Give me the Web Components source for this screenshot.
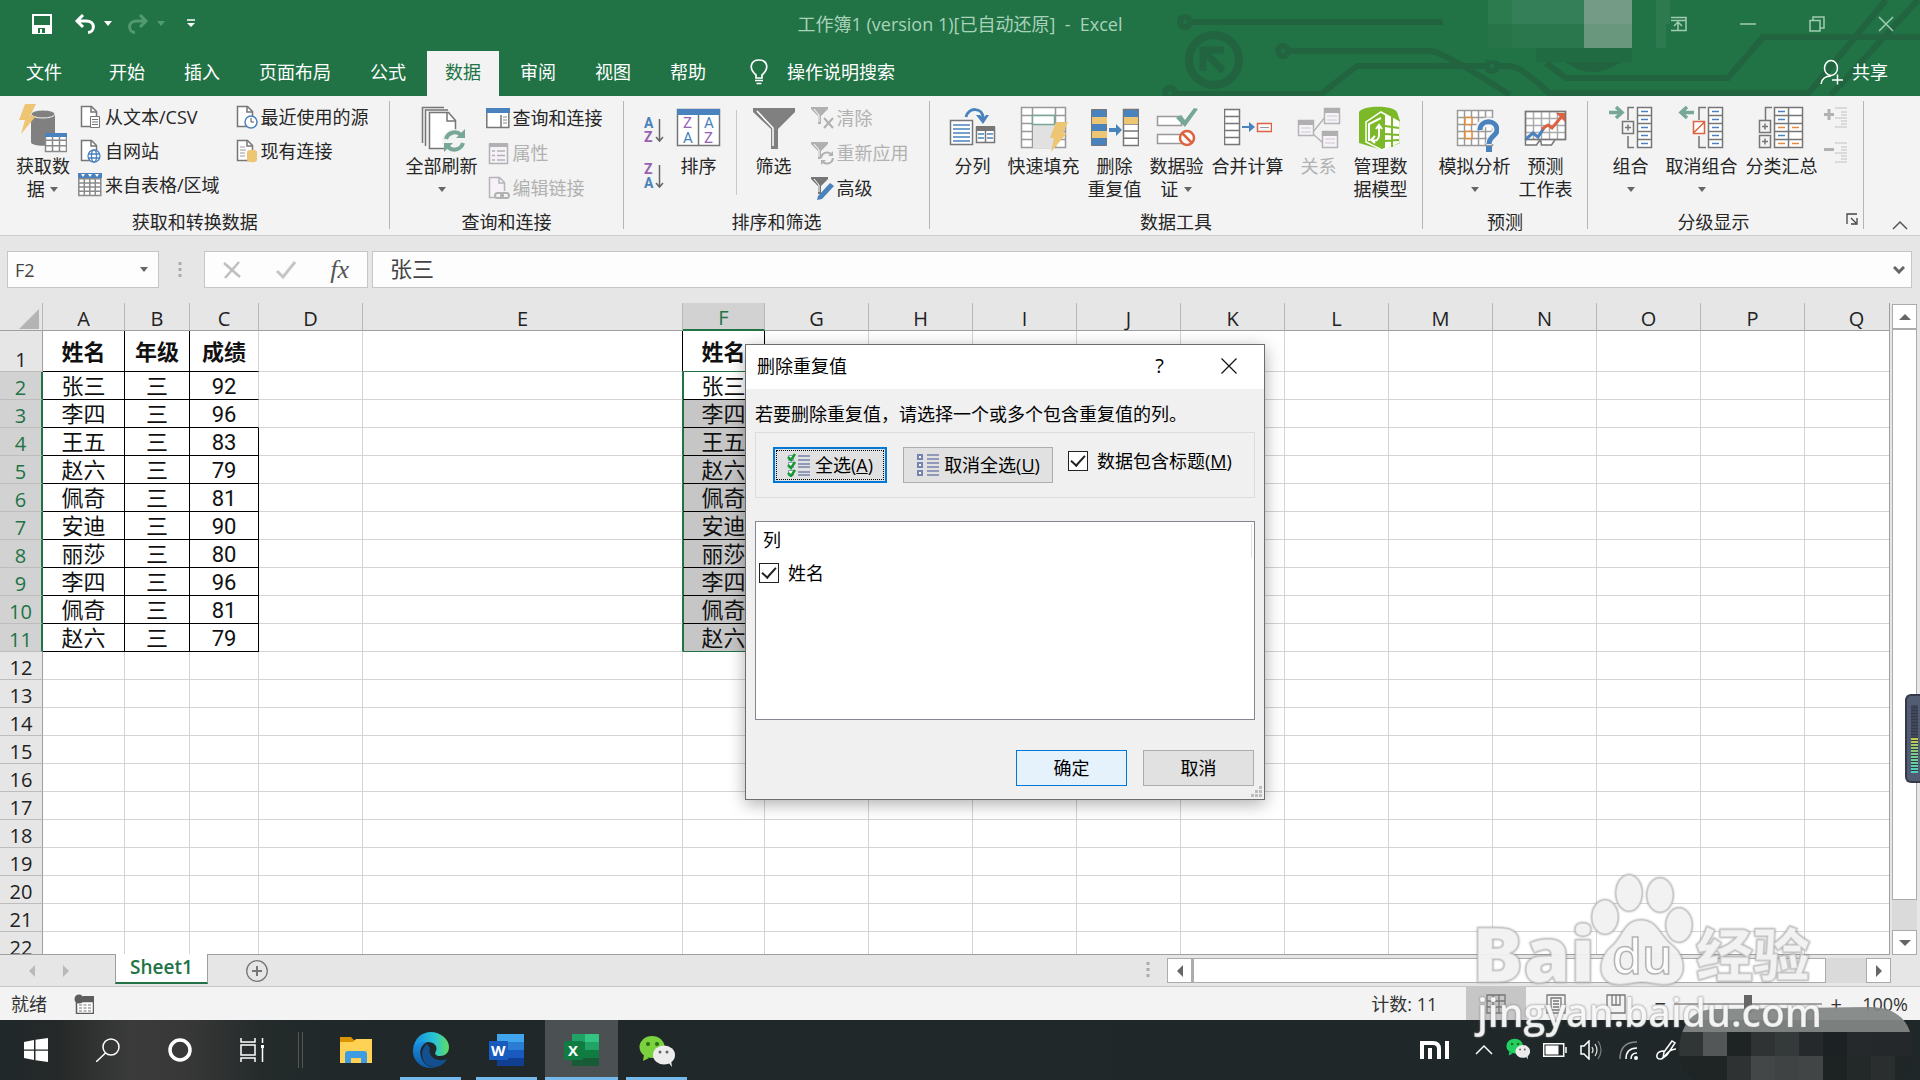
<!DOCTYPE html>
<html lang="zh-CN">
<head>
<meta charset="utf-8">
<title>工作簿1 - Excel</title>
<style>
html,body{margin:0;height:100%}
body{font-family:"Open Sans","Noto Sans CJK SC",sans-serif;font-size:18px;line-height:24px;color:#262626;overflow:hidden;background:#e6e6e6}
</style>
</head>
<body>
<excel-desktop></excel-desktop>
<script>
const BASE = `*{box-sizing:border-box}
button,input{font:inherit;color:inherit;margin:0;padding:0;border:0;background:none;letter-spacing:normal;outline:0}
svg{display:block}`;

/* Registers an element whose shadow tree is built from a css string and a markup string or function. */
function define(name, css, html) {
  customElements.define(name, class extends HTMLElement {
    connectedCallback() {
      if (this.shadowRoot) return;
      const t = document.createElement('template');
      t.innerHTML = `<style>${BASE}${css}</style>${typeof html === 'function' ? html(this) : html}`;
      this.attachShadow({ mode: 'open' }).append(t.content.cloneNode(true));
    }
  });
}

const G = '#767676', B = '#4a82bd', T = '#76a797', O = '#e58a3c', R = '#dc6240', Y = '#eec573', P = '#9660b4';
const page = (c, f = '#fff') => `<path d="M3.5 1.500h10l5 5v15h-15z" fill="${f}" stroke="${c}" stroke-width="1.500"/><path d="M13 2v5h5" fill="none" stroke="${c}" stroke-width="1.500"/>`;
const cells = (x, y, w, h, nx, ny, c, sw = 1.5) => {
  let d = `M${x} ${y}h${w}v${h}h${-w}z`;
  for (let i = 1; i < nx; i++) d += `M${x + w * i / nx} ${y}v${h}`;
  for (let i = 1; i < ny; i++) d += `M${x} ${y + h * i / ny}h${w}`;
  return `<path d="${d}" fill="#fff" stroke="${c}" stroke-width="${sw}"/>`;
};
const funnel = (x, c) => `<path d="M1 1h17v2l-7 7v8h-3v-8l-7-7z" fill="${c}"/><path d="M4 3l5 6v7" stroke="#fff" stroke-width="1" fill="none"/>${x}`;
const az = (a, b, ca, cb) => `<g font-family="Roboto" font-size="14" font-weight="700"><text x="1" y="11" fill="${ca}">${a}</text><text x="1" y="25" fill="${cb}">${b}</text></g><path d="M16.500 2v22M13 20l3.500 4 3.500-4" fill="none" stroke="#666" stroke-width="1.500"/>`;
const wechat = `<ellipse cx="13" cy="12" rx="12.500" ry="11" fill="#7bd23f"/><path d="M5 20l-1 6 6-3z" fill="#7bd23f"/><circle cx="9" cy="9" r="2" fill="#2a6b1c"/><circle cx="18" cy="9" r="2" fill="#2a6b1c"/><ellipse cx="25" cy="20" rx="11" ry="9.500" fill="#ececec"/><path d="M29 27l4 5-1-7z" fill="#ececec"/><circle cx="21" cy="17" r="1.500" fill="#666"/><circle cx="28" cy="17" r="1.500" fill="#666"/>`;

const ICONS = {
  getdata: [48, 52, `<path d="M12 11v28c0 5 24 5 24 0V11z" fill="#808080"/><ellipse cx="24" cy="11" rx="12" ry="4" fill="#808080" stroke="#f3f3f3"/><path d="M6 1h11l-6 12h6L2 31l4-14H0z" fill="${Y}"/>${cells(26.500, 31.500, 21, 17, 3, 3, '#8a8a8a')}<path d="M26 30h22v4H26z" fill="${B}"/>`],
  refresh: [48, 52, `<path d="M4.500 40V4.500H26M7.500 43V7H30" fill="none" stroke="${G}" stroke-width="1.500"/><path d="M11.500 9.500h19l7 8v28h-26z" fill="#fff" stroke="${G}" stroke-width="1.500"/><path d="M29 10v8h8" fill="none" stroke="${G}" stroke-width="1.500"/><circle cx="36" cy="38" r="12" fill="#f3f3f3"/><path d="M28 36a9 9 0 0 1 15-4M45 40a9 9 0 0 1-15 4" fill="none" stroke="${T}" stroke-width="4"/><path d="M47 26v9h-9zM26 49v-9h9z" fill="${T}"/>`],
  sort: [48, 52, `<path d="M2.500 6.500h42v36h-42zM23.500 12v30" fill="#fff" stroke="${G}" stroke-width="1.500"/><path d="M2 6h43v6H2z" fill="${B}"/><g font-family="Roboto" font-size="15"><text x="8" y="25" fill="${P}">Z</text><text x="8" y="40" fill="${B}">A</text><text x="29" y="25" fill="${B}">A</text><text x="29" y="40" fill="${P}">Z</text></g>`],
  filter: [48, 52, `<path d="M3 5h42v4L28 26v20h-7V26L3 9z" fill="#808080"/><path d="M7 8l16 17v18" fill="none" stroke="#fff" stroke-width="1.500"/>`],
  textcol: [48, 52, `<path d="M1.500 17.500h22v24h-22z" fill="#fff" stroke="${G}" stroke-width="1.500"/><path d="M4 22h17M4 26h17M4 30h17M4 34h17M4 38h17" stroke="${B}" stroke-width="1.500"/><path d="M17 14c2-10 17-10 17 1" fill="none" stroke="${B}" stroke-width="3"/><path d="M27 12h4l3 3 3-3h3l-6 9z" fill="${B}"/>${cells(27.500, 24.500, 18, 15, 2, 1, G)}<path d="M27 23h19v5H27z" fill="${G}"/><path d="M29 31h6M38 31h6M29 35h6M38 35h6" stroke="${B}" stroke-width="1.500"/>`],
  flash: [48, 52, `${cells(1.500, 4.500, 44, 40, 1, 5, '#999')}<path d="M12.500 4v41M35.500 4v41" stroke="#999" stroke-width="1.500"/><path d="M13 22h22v23H13z" fill="#e1e1e1"/><path d="M12.500 12.500h22v9h-22z" fill="#fff" stroke="${T}" stroke-width="1.500"/><path d="M36 19h12l-5 11h4L31 49l3-14h-4z" fill="${Y}"/>`],
  dedupe: [48, 52, `<path d="M.5 6.500h15v36h-15z" fill="${B}" stroke="${G}"/><path d="M1 14h15v7H1zM1 28h15v7H1z" fill="${Y}"/>${cells(32.500, 6.500, 15, 36, 1, 5, G)}<path d="M33 7h14v7H33z" fill="${B}"/><path d="M33 14h14v7H33z" fill="${Y}"/><path d="M18 25h7v-4l6 6-6 6v-4h-7z" fill="${B}"/>`],
  validate: [48, 52, `<path d="M4.500 13.500h24v9h-24zM4.500 31.500h24v9h-24z" fill="#fff" stroke="#999" stroke-width="1.500"/><path d="M23 15l5-3 4 5 9-12 4 1-13 18z" fill="${T}"/><circle cx="34" cy="35" r="7" fill="#fff" stroke="${R}" stroke-width="2.500"/><path d="M29 30l10 10" stroke="${R}" stroke-width="2.500"/>`],
  merge: [48, 52, `${cells(.5, 6.500, 15, 35, 1, 5, G)}<path d="M18 23h7v-4l6 5-6 5v-4h-7z" fill="${B}"/><path d="M33.500 20.500h14v8h-14z" fill="#fff" stroke="${R}" stroke-width="1.500"/><path d="M36 24.500h9" stroke="#999"/>`],
  relation: [48, 52, `<path d="M18 29L31 13M18 31l10 9" stroke="#b5b5b5" stroke-width="1.500"/><path d="M3.500 17.500h15v15h-15zM29.500 5.500h15v15h-15zM27.500 28.500h15v16h-15z" fill="#f7f1f9" stroke="#b5b5b5" stroke-width="1.500"/><path d="M3 17h16v5H3zM29 5h16v5H29zM27 28h16v5H27z" fill="#b0aeb1"/><path d="M6 25h10M6 29h10M32 13h10M32 17h10M30 36h10M30 40h10" stroke="#ccc"/>`],
  model: [48, 52, `<path d="M2 9c4-7 34-7 38 0l3 9v22L25 47 2 40z" fill="#7bb928"/><path d="M9 39V19l15-10 18 10v20L25 47z" fill="#7bb928" stroke="#fff" stroke-width="1.500"/><path d="M28 12v34l14-8V19z" fill="#fff"/><path d="M28 23l14 2M28 31l14 1M28 38l14-1M35 14v30" stroke="#7bb928" stroke-width="2"/><path d="M12 38V21l12-6M22 23v9q0 7-7 5M19 26l3-4 3 4M18 33l-4 4 4 3" fill="none" stroke="#fff" stroke-width="2"/>`],
  whatif: [48, 52, `${cells(6.500, 7.500, 35, 35, 5, 5, '#9a9a9a')}<path d="M14 14.500h7v7h-7zM14 28.500h7v7h-7z" fill="#fff" stroke="${O}" stroke-width="1.500"/><path d="M29 27c0-11 17-11 17 0 0 6-7 6-7 14" fill="none" stroke="#f3f3f3" stroke-width="9"/><path d="M29 27c0-11 17-11 17 0 0 6-8 6-8 14" fill="none" stroke="${B}" stroke-width="5"/><path d="M35 43h6v6h-6z" fill="${B}"/>`],
  forecast: [48, 52, `<path d="M3.500 36v6h11l4-6 1 6h10l4-6" fill="#fff" stroke="${G}" stroke-width="1.500"/>${cells(3.500, 8.500, 40, 28, 5, 4, '#aaa')}<path d="M3.500 8.500h40v28h-40z" fill="none" stroke="${G}" stroke-width="1.500"/><path d="M4 36l7-6 5 4 6-9" fill="none" stroke="${B}" stroke-width="3"/><path d="M20 26l6-4 4 3 11-13" fill="none" stroke="${R}" stroke-width="3"/><path d="M34 10h9v9z" fill="${R}"/>`],
  group: [48, 52, `<path d="M2 9.500h11M9 4l6 5.500L9 15" fill="none" stroke="${T}" stroke-width="3.500"/><path d="M27 4.500h-6V17M27 44.500h-6V33M15.500 18.500h11v12h-11zM18 24.500h6M21 21.500v6" fill="none" stroke="${G}" stroke-width="1.500"/>${cells(30.500, 4.500, 14, 40, 1, 5, G)}<path d="M34 8.500h7M34 16.500h7M34 24.500h7M34 32.500h7M34 40.500h7" stroke="${B}" stroke-width="1.500"/>`],
  ungroup: [48, 52, `<path d="M3 9.500h13M9 4L3 9.500 9 15" fill="none" stroke="${T}" stroke-width="3.500"/><path d="M28 4.500h-7V17M28 44.500h-7V33" fill="none" stroke="${G}" stroke-width="1.500"/><path d="M15.500 18.500h11v12h-11zM15.500 30l11-11" fill="#fff" stroke="${R}" stroke-width="1.500"/>${cells(30.500, 4.500, 14, 40, 1, 5, G)}<path d="M34 8.500h7M34 16.500h7M34 24.500h7M34 32.500h7M34 40.500h7" stroke="${B}" stroke-width="1.500"/>`],
  subtotal: [48, 52, `<path d="M14 4.500H7.500V17M1.500 17.500h11v12h-11zM1.500 32.500h11v12h-11zM4 23.500h6M7 20.500v6M4 38.500h6M7 35.500v6" fill="none" stroke="${G}" stroke-width="1.500"/>${cells(16.500, 4.500, 28, 40, 2, 5, G)}<path d="M20 8.500h7M20 16.500h7M20 32.500h7" stroke="${B}" stroke-width="1.500"/><path d="M20 24.500h7M34 24.500h7M20 40.500h7M34 40.500h7" stroke="${O}" stroke-width="1.500"/>`],
  csv: [24, 24, page(G) + `<path d="M12.500 11.500h9v11h-9z" fill="#fff" stroke="${G}"/><path d="M14 14.500h6M14 17h6M14 19.500h6" stroke="${G}"/>`],
  web: [24, 24, page(G) + `<g fill="#fff" stroke="${B}" stroke-width="1.300"><circle cx="16" cy="17" r="6"/><ellipse cx="16" cy="17" rx="2.500" ry="6"/><path d="M10 15h12M10 19h12"/></g>`],
  range: [24, 24, cells(.8, 1.500, 22, 21, 4, 5, '#8a8a8a') + `<path d="M0 0h24v5H0z" fill="${B}"/><path d="M3 1h4l-2 3zM10 1h4l-2 3zM17 1h4l-2 3z" fill="#fff"/>`],
  recent: [24, 24, page(G) + `<circle cx="17" cy="17" r="6" fill="#fff" stroke="${B}" stroke-width="1.500"/><path d="M17 13v4h3" fill="none" stroke="#555"/>`],
  existing: [24, 24, page(G) + `<path d="M6 8h5M6 11h6M6 14h5M6 17h5" stroke="#999"/><path d="M13 13v8c0 3 10 3 10 0v-8c0-3-10-3-10 0z" fill="${Y}"/>`],
  queries: [24, 24, `<path d="M.8 3.500h22v18H.8zM15 9v12" fill="#fff" stroke="${G}" stroke-width="1.500"/><path d="M0 2h24v5H0z" fill="${B}"/><path d="M17 11h4M17 14h4M17 17h4" stroke="#888"/>`],
  props: [24, 24, `<path d="M3.500 3.500h18v19h-18z" fill="#f7f1f9" stroke="#b1b1b1" stroke-width="1.500"/><path d="M3 2h19v4H3z" fill="#b1b1b1"/><path d="M6 10h3M6 14.500h3M6 19h3M11 10h8M11 14.500h8M11 19h8" stroke="#b1b1b1" stroke-width="1.500"/>`],
  links: [24, 24, page('#b5b5b5', '#f7f1f9') + `<path d="M9 15h14v9H9z" fill="#f3f3f3"/><g fill="none" stroke="#b1b1b1" stroke-width="2"><rect x="9" y="17" width="8" height="5" rx="2.500"/><rect x="15" y="17" width="8" height="5" rx="2.500"/></g>`],
  clear: [24, 24, funnel('<path d="M14 12l9 10M23 12l-9 10" stroke="#b1b1b1" stroke-width="2"/>', '#b1b1b1')],
  reapply: [24, 24, funnel('<path d="M11 17a6 6 0 0 1 10-4M23 17a6 6 0 0 1-10 4" fill="none" stroke="#b1b1b1" stroke-width="2"/><path d="M23 10v5h-5zM11 24v-5h5z" fill="#b1b1b1"/>', '#b1b1b1')],
  advanced: [24, 24, funnel(`<path d="M8 20L20 7l4 3-12 13-5 1z" fill="${B}"/>`, '#767676')],
  az: [22, 26, az('A', 'Z', B, P)],
  za: [22, 26, az('Z', 'A', P, B)],
  showdetail: [24, 24, `<path d="M0 8.500h10M5 3v11" stroke="#b1b1b1" stroke-width="3"/><path d="M11 2h12M17 6h6M17 9h6M11 12h12M17 15h6M17 18h6M11 21h12" stroke="#c2c2c2" stroke-width="1.200"/>`],
  hidedetail: [24, 24, `<path d="M0 8.500h10" stroke="#b1b1b1" stroke-width="3"/><path d="M11 2h12M17 6h6M17 9h6M11 12h12M17 15h6M17 18h6M11 21h12" stroke="#c2c2c2" stroke-width="1.200"/>`],
  arrow: [10, 6, `<path d="M1 0h8L5 5z" fill="currentColor"/>`],
  launcher: [12, 12, `<path d="M1 11V1h10M5 5l5 5M11 5v6H5" fill="none" stroke="#444" stroke-width="1.300"/>`],
  collapse: [16, 10, `<path d="M1 9l7-7 7 7" fill="none" stroke="#555" stroke-width="1.500"/>`],
  save: [20, 20, `<path d="M1 1h18v18H1z" fill="none" stroke="#fff" stroke-width="2"/><path d="M2 11h16v8H2z" fill="#fff"/><path d="M6 14h7v5H6z" fill="#217346"/><path d="M8 15h2v4H8z" fill="#fff"/>`],
  undo: [22, 20, `<path d="M3 7h9c10 0 9 11 2 11.500M9 1L3 7l6 6" fill="none" stroke="#fff" stroke-width="3"/>`],
  redo: [22, 20, `<path d="M19 7h-9C0 7 1 18 8 18.500M13 1l6 6-6 6" fill="none" stroke="#539a72" stroke-width="3"/>`],
  custom: [8, 10, `<path d="M0 1h8" stroke="#fff" stroke-width="1.500"/><path d="M0 4h8L4 8z" fill="#fff"/>`],
  bulb: [20, 26, `<path d="M7 19v-3C-1 9 2 1 10 1s11 8 3 15v3z" fill="none" stroke="#fff" stroke-width="1.700"/><path d="M6 21.500h8M7.500 24.500h5" stroke="#fff" stroke-width="1.700"/>`],
  share: [24, 26, `<ellipse cx="11" cy="9" rx="6.500" ry="7.500" fill="none" stroke="#fff" stroke-width="1.500"/><path d="M1 25c1-6 5-8 10-8M12 21h11M17.500 15.500v10" fill="none" stroke="#fff" stroke-width="1.500"/>`],
  ribbonopt: [16, 16, `<path d="M0 1.500h15v13H0M0 4.500h15M7 14V7M3 10l4-4 4 4" fill="none" stroke="#a0ccb2" stroke-width="1.500"/>`],
  min: [16, 16, `<path d="M0 8h16" stroke="#a0ccb2" stroke-width="1.500"/>`],
  restore: [16, 16, `<path d="M1 4.500h10v10.500H1zM4 4V1h11v11h-4" fill="none" stroke="#a0ccb2" stroke-width="1.500"/>`],
  close: [16, 16, `<path d="M1 1l14 14M15 1L1 15" stroke="#a0ccb2" stroke-width="1.500"/>`],
  dlgclose: [16, 16, `<path d="M.5.5l15 15M15.500.5l-15 15" stroke="#111" stroke-width="1.200"/>`],
  dots: [4, 16, `<path d="M.5 0h3v3h-3zM.5 6h3v3h-3zM.5 12h3v3h-3z" fill="#ababab"/>`],
  cancel: [18, 18, `<path d="M1 2l16 14M16 1L2 17" stroke="#bfbfbf" stroke-width="2.500"/>`],
  enter: [20, 18, `<path d="M1 10l6 6L19 1" fill="none" stroke="#c6c6c6" stroke-width="3"/>`],
  chevdown: [12, 8, `<path d="M1 1l5 5 5-5" fill="none" stroke="#666" stroke-width="3"/>`],
  corner: [20, 20, `<path d="M20 0v20H0z" fill="#b4b4b4"/>`],
  left: [8, 12, `<path d="M7 0v12L1 6z" fill="currentColor"/>`],
  right: [8, 12, `<path d="M1 0v12l6-6z" fill="currentColor"/>`],
  up: [12, 8, `<path d="M0 7h12L6 1z" fill="currentColor"/>`],
  down: [12, 8, `<path d="M0 1h12L6 7z" fill="currentColor"/>`],
  add: [24, 24, `<circle cx="12" cy="12" r="10.300" fill="none" stroke="#777" stroke-width="1.300"/><path d="M7 12h10M12 7v10" stroke="#777" stroke-width="2"/>`],
  macro: [20, 20, `<path d="M2.500 7.500h17v12h-17z" fill="#fff" stroke="#5d5d5d" stroke-width="1.500"/><path d="M9 2h11v5H9z" fill="#5d5d5d"/><circle cx="5" cy="5" r="4.500" fill="#5d5d5d"/><path d="M5 11h12M5 14h12M5 17h12" stroke="#777" stroke-dasharray="3 1.500"/>`],
  normal: [20, 20, `<path d="M1 1h18v18H1zM7 1v18M13 1v18M1 7h18M1 13h18" fill="none" stroke="#777" stroke-width="1.300"/>`],
  layout: [20, 20, `<path d="M1 1h18v18H1zM5 4h10v12H5zM7 7h6M7 10h6M7 13h6" fill="none" stroke="#777" stroke-width="1.300"/>`],
  pagebreak: [20, 20, `<path d="M1 1h18v18H1zM6 1v10h8V1M10 1v10" fill="none" stroke="#777" stroke-width="1.300"/>`],
  checklist: [24, 24, `<g fill="#fff" stroke="#8d99b8"><path d="M1.500 2.500h5v5h-5zM1.500 9.500h5v5h-5zM1.500 17.500h5v5h-5z"/></g><path d="M1 4l3 3 4-6M1 12l3 3 4-6M1 20l3 3 4-6" fill="none" stroke="#159a35" stroke-width="2.500"/><path d="M11 3h12M11 7h12M11 11h12M11 14h12M11 19h12M11 22h12" stroke="#7583ab" stroke-width="1.500"/>`],
  unchecklist: [24, 24, `<g fill="#fff" stroke="#7583b3" stroke-width="2"><path d="M2 2h4v4H2zM2 10h4v4H2zM2 18h4v4H2z"/></g><path d="M11 2h12M11 6h12M11 10h12M11 14h12M11 18h12M11 22h12" stroke="#7583ab" stroke-width="1.500"/>`],
  grip: [12, 12, `<path d="M8 0h3v3H8zM4 4h3v3H4zM8 4h3v3H8zM0 8h3v3H0zM4 8h3v3H4zM8 8h3v3H8z" fill="#bdbdbd"/>`],
  start: [24, 24, `<path d="M0 4l10-2v9.500H0zM11.500 1.700L24 0v11.500H11.500zM0 12.700h10V22L0 20zM11.500 12.700H24V24l-12.500-1.700z" fill="#fff"/>`],
  search: [24, 24, `<circle cx="15" cy="9" r="8" fill="none" stroke="#fff" stroke-width="1.500"/><path d="M9.500 15L0 24" stroke="#fff" stroke-width="1.500"/>`],
  cortana: [24, 24, `<circle cx="12" cy="12" r="10" fill="none" stroke="#fff" stroke-width="3.500"/>`],
  taskview: [24, 24, `<path d="M1 0v4h14V0M1 24v-4h14v4M1 7h14v10H1zM22.500 0v5M22.500 10v14" fill="none" stroke="#fff" stroke-width="1.500"/><path d="M21 7h3v3h-3z" fill="#fff"/>`],
  folder: [36, 36, `<path d="M2 5h11l3 3h15v6H2z" fill="#dc9500"/><path d="M2 10h13l3-3h16v24H2z" fill="#ffd255"/><path d="M7 31V22q0-3 3-3h16q3 0 3 3v9h-6v-5H13v5z" fill="#3f9be2"/>`],
  edge: [36, 36, `<defs><linearGradient id="e"><stop stop-color="#178ade"/><stop offset=".6" stop-color="#28c5d4"/><stop offset="1" stop-color="#62dc61"/></linearGradient><linearGradient id="f" x2="0" y2="1"><stop stop-color="#1b8fe0"/><stop offset="1" stop-color="#0c59a4"/></linearGradient></defs><path d="M0 18C1 6 9 0 18 0s18 7 18 15c0 6-4 9-9 9-4 0-6-2-4-5 2-5-2-9-8-9C8 10 2 13 0 18z" fill="url(#e)"/><path d="M0 18c2-6 8-9 14-8-6 3-8 9-6 15 2 7 8 11 15 10-12 4-24-5-23-17z" fill="url(#f)"/><path d="M14 12c-7 5-8 22 8 23 5 0 10-4 12-8-9 4-20-2-17-11z" fill="#14508f"/>`],
  word: [36, 36, `<path d="M8 2h27v9H8z" fill="#41a5ee"/><path d="M8 10h27v8H8z" fill="#2b7cd3"/><path d="M8 18h27v8H8z" fill="#185abd"/><path d="M8 26h27v8H8z" fill="#103f91"/><rect y="9" width="19" height="19" rx="1" fill="#185abd"/><text x="2" y="24" font-size="15" font-weight="700" fill="#fff">W</text>`],
  excel: [36, 36, `<path d="M8 2h14v9H8z" fill="#21a366"/><path d="M21 2h14v9H21z" fill="#33c481"/><path d="M8 10h14v8H8z" fill="#107c41"/><path d="M21 10h14v8H21z" fill="#21a366"/><path d="M8 18h27v8H8z" fill="#107c41"/><path d="M8 26h27v8H8z" fill="#185c37"/><rect y="9" width="19" height="19" rx="1" fill="#107c41"/><text x="4" y="24" font-size="15" font-weight="700" fill="#fff">X</text>`],
  wechat: [36, 36, `<g transform="translate(0 3)">${wechat}</g>`],
  mi: [30, 18, `<path d="M0 18V0h13q8 0 8 8v10h-4V8q0-4-4-4H4v14zM8 7h4v11H8zM25 0h4v18h-4z" fill="#fff"/>`],
  chevup: [18, 12, `<path d="M1 10l8-8 8 8" fill="none" stroke="#fff" stroke-width="1.500"/>`],
  wechats: [24, 24, `<g transform="scale(.67)">${wechat.replaceAll('#7bd23f', '#20d060')}</g>`],
  battery: [24, 14, `<path d="M.7.7h20v12.500h-20zM23 4v6" fill="none" stroke="#fff" stroke-width="1.500"/><path d="M2.500 2.500h13v9h-13z" fill="#fff"/>`],
  speaker: [22, 20, `<path d="M1 6h3l5-5v18l-5-5H1z" fill="none" stroke="#fff" stroke-width="1.500"/><path d="M12 7q2 3 0 6M15 4q4 6 0 12" fill="none" stroke="#ddd" stroke-width="1.300"/><path d="M18 1q6 9 0 18" fill="none" stroke="#777" stroke-width="1.300"/>`],
  wifi: [20, 20, `<circle cx="17" cy="18" r="2" fill="#fff"/><path d="M12 19q0-6 6-6M7 19Q7 8 18 8" fill="none" stroke="#fff" stroke-width="1.500"/><path d="M1 19Q1 2 18 2" fill="none" stroke="#888" stroke-width="1.500"/>`],
  pen: [22, 20, `<path d="M8 12L16 1l3 2-8 12-4 3zM8 11c-9 0-9 9-3 8 4-1 6-10 15-10" fill="none" stroke="#fff" stroke-width="1.500"/>`]
};
define('ui-icon', `:host{display:block;flex:none}svg{font-family:"Open Sans",sans-serif}`, el => {
  const [w, h, body] = ICONS[el.getAttribute('name')];
  return `<svg width="${w}" height="${h}" viewBox="0 0 ${w} ${h}" aria-hidden="true">${body}</svg>`;
});

/* ---------- green header ---------- */
define('circuit-art', `:host{display:block;position:absolute;right:0;top:0;pointer-events:none}`, () => {
  const m = (x, y, w, h, c) => `<rect x="${x}" y="${y}" width="${w}" height="${h}" fill="${c}"/>`;
  return `<svg width="760" height="96" viewBox="1160 0 760 96" fill="none" stroke="#22643f" stroke-width="6">
<circle cx="1185" cy="22" r="5"/><path d="M1190 22h280"/>
<circle cx="1214" cy="60" r="25" stroke-width="8"/><path d="M1203 71V50h21M1204 51l19 20" stroke-width="7"/>
<circle cx="1170" cy="93" r="5"/><path d="M1175 94h146l36-28h152q12 0 40 27h260l77-93"/>
<circle cx="1283" cy="51" r="5"/><path d="M1288 51h142q12 0 80 44"/>
<path d="M1546 63l20 15h162l35-41h157M1831 95L1918 0"/><circle cx="1492" cy="66" r="5" fill="#217346"/>
<path d="M1565 62h56q-28 20-56 0z" fill="#22643f" stroke="none"/>
<g stroke="none"><rect x="1441" y="-40" width="231" height="101" rx="60" fill="#217346"/>
${m(1488, 0, 24, 24, '#2c7b4f')}${m(1512, 0, 72, 24, '#347f58')}${m(1512, 24, 72, 24, '#2b774d')}${m(1488, 24, 24, 24, '#287449')}${m(1584, 0, 48, 24, '#749b85')}${m(1584, 24, 48, 24, '#69977e')}${m(1656, 0, 14, 24, '#2d7a50')}${m(1656, 24, 10, 24, '#2d7a50')}${m(1536, 48, 96, 14, '#216b43')}</g></svg>`;
});
define('title-bar', `:host{display:grid;grid-template-columns:1fr auto 1fr;align-items:center;height:48px;color:#a9d2b9;position:relative}
.qat{display:flex;align-items:center;gap:7px;padding-left:32px;color:#fff}.save{margin-right:15px}.redo{margin-left:7px}.off{color:#539a72}.custom{margin-left:14px}
.title{white-space:pre}.win{display:flex;justify-content:flex-end}.win button{width:69px;height:32px;display:grid;place-items:center}`,
`<div class="qat"><button class="save" aria-label="保存"><ui-icon name="save"></ui-icon></button><button aria-label="撤消"><ui-icon name="undo"></ui-icon></button><button aria-label="撤消选项"><ui-icon name="arrow"></ui-icon></button><button class="redo" aria-label="恢复"><ui-icon name="redo"></ui-icon></button><button class="off" aria-label="恢复选项"><ui-icon name="arrow"></ui-icon></button><button class="custom" aria-label="自定义"><ui-icon name="custom"></ui-icon></button></div>
<div class="title">工作簿1 (version 1)[已自动还原]  -  Excel</div>
<div class="win"><button aria-label="功能区选项"><ui-icon name="ribbonopt"></ui-icon></button><button aria-label="最小化"><ui-icon name="min"></ui-icon></button><button aria-label="还原"><ui-icon name="restore"></ui-icon></button><button aria-label="关闭"><ui-icon name="close"></ui-icon></button></div>`);
define('ribbon-tabs', `:host{display:flex;align-items:stretch;height:48px;padding-top:3px;color:#fff;position:relative}
nav{display:flex;gap:3px;flex:1}button{padding:0 18px;height:45px;padding-bottom:3px;white-space:nowrap}.file{padding-left:26px;padding-right:26px}.on{background:#f3f3f3;color:#217346}
.tell{display:flex;align-items:center;gap:18px;margin-left:4px}.share{display:flex;align-items:center;gap:8px;padding:0 32px 3px 0}`,
`<nav><button class="file">文件</button>${['开始', '插入', '页面布局', '公式', '数据', '审阅', '视图', '帮助'].map(t => `<button${t === '数据' ? ' class="on"' : ''}>${t}</button>`).join('')}<button class="tell"><ui-icon name="bulb"></ui-icon>操作说明搜索</button></nav><button class="share"><ui-icon name="share"></ui-icon>共享</button>`);

/* ---------- ribbon ---------- */
define('big-button', `:host{display:block}button{display:flex;flex-direction:column;align-items:center;min-width:54px;padding-top:3px;line-height:23px;white-space:nowrap}.t{text-align:center}.a{display:inline-block;color:#666;vertical-align:3px}:host([disabled]) button{color:#b1b1b1}`,
  el => `<button${el.hasAttribute('disabled') ? ' disabled' : ''}><ui-icon name="${el.getAttribute('icon')}"></ui-icon><span class="t"><slot></slot>${el.hasAttribute('arrow') ? '<ui-icon class="a" name="arrow"></ui-icon>' : ''}</span></button>`);
define('small-button', `:host{display:flex;align-items:center;height:var(--row,35px)}button{display:flex;align-items:center;gap:3px;white-space:nowrap}:host([disabled]) button{color:#b1b1b1}`,
  el => `<button${el.hasAttribute('disabled') ? ' disabled' : ''} aria-label="${el.getAttribute('label') || el.textContent}"><ui-icon name="${el.getAttribute('icon')}"></ui-icon><span><slot></slot></span></button>`);
define('ribbon-group', `:host{display:flex;flex-direction:column;padding:4px 0 0;position:relative}.c{display:flex;gap:8px;height:110px;padding:0 15px 0 16px}.n{text-align:center;line-height:24px;white-space:nowrap}:host([launcher]) .n{padding-right:24px}
:host::after{content:"";position:absolute;right:0;top:5px;bottom:6px;width:1px;background:#b5b5b5}.l{position:absolute;right:6px;bottom:5px}`,
  el => `<div class="c"><slot></slot></div><div class="n">${el.getAttribute('name')}</div>${el.hasAttribute('launcher') ? '<div class="l"><button aria-label="更多"><ui-icon name="launcher"></ui-icon></button></div>' : ''}`);
define('data-ribbon', `:host{display:flex;height:140px;background:#f3f3f3;border-bottom:1px solid #cfcfcf}
.col{display:flex;flex-direction:column}.g1{--row:34px;margin-right:6px}.g1b{--row:34px;margin-right:6px}.g2{margin-right:6px}.sorts{--row:46px;padding-top:7px;margin:0 -4px 0 3px}.rule{width:1px;height:85px;margin:10px 2px 0;background:#c8c8c8}.detail{margin:0 -2px}.fold{margin-left:auto;align-self:flex-end;padding:0 12px 5px 0}.g3{margin:0 6px 0 1px}`,
`<ribbon-group name="获取和转换数据"><big-button icon="getdata" arrow>获取数<br>据&nbsp;</big-button><div class="col g1"><small-button icon="csv">从文本/CSV</small-button><small-button icon="web">自网站</small-button><small-button icon="range">来自表格/区域</small-button></div><div class="col g1b"><small-button icon="recent">最近使用的源</small-button><small-button icon="existing">现有连接</small-button></div></ribbon-group>
<ribbon-group name="查询和连接"><big-button icon="refresh" arrow>全部刷新<br></big-button><div class="col g2"><small-button icon="queries">查询和连接</small-button><small-button icon="props" disabled>属性</small-button><small-button icon="links" disabled>编辑链接</small-button></div></ribbon-group>
<ribbon-group name="排序和筛选"><div class="col sorts"><small-button icon="az" label="升序"></small-button><small-button icon="za" label="降序"></small-button></div><big-button icon="sort">排序</big-button><div class="rule"></div><big-button icon="filter">筛选</big-button><div class="col g3"><small-button icon="clear" disabled>清除</small-button><small-button icon="reapply" disabled>重新应用</small-button><small-button icon="advanced">高级</small-button></div></ribbon-group>
<ribbon-group name="数据工具"><big-button icon="textcol">分列</big-button><big-button icon="flash">快速填充</big-button><big-button icon="dedupe">删除<br>重复值</big-button><big-button icon="validate" arrow>数据验<br>证&nbsp;</big-button><big-button icon="merge">合并计算</big-button><big-button icon="relation" disabled>关系</big-button><big-button icon="model">管理数<br>据模型</big-button></ribbon-group>
<ribbon-group name="预测"><big-button icon="whatif" arrow>模拟分析<br></big-button><big-button icon="forecast">预测<br>工作表</big-button></ribbon-group>
<ribbon-group name="分级显示" launcher><big-button icon="group" arrow>组合<br></big-button><big-button icon="ungroup" arrow>取消组合<br></big-button><big-button icon="subtotal">分类汇总</big-button><div class="col detail"><small-button icon="showdetail" label="显示明细数据"></small-button><small-button icon="hidedetail" label="隐藏明细数据"></small-button></div></ribbon-group>
<button class="fold" aria-label="折叠功能区"><ui-icon name="collapse"></ui-icon></button>`);

/* ---------- formula bar ---------- */
define('formula-bar', `:host{display:flex;align-items:center;padding:15px 8px 15px 7px;height:67px}
.box{display:flex;align-items:center;height:37px;background:#fdfdfd;border:1px solid #c6c6c6}.name{width:152px;padding:0 9px 0 7px;color:#666}.name input{flex:1;min-width:0;color:#444}.dots{margin:0 22px 0 19px}
.tools{width:164px;justify-content:space-between;padding:0 18px}.fx{font:italic 26px/30px "Liberation Serif",serif;color:#555}.f{flex:1;margin-left:4px;padding:0 6px 0 17px}.f input{flex:1;min-width:0;font:22px/24px Roboto,"Noto Sans CJK SC",sans-serif;color:#444}`,
`<div class="box name"><input aria-label="名称框" value="F2"><button aria-label="名称列表"><ui-icon name="arrow"></ui-icon></button></div><ui-icon class="dots" name="dots"></ui-icon>
<div class="box tools"><button aria-label="取消输入"><ui-icon name="cancel"></ui-icon></button><button aria-label="输入"><ui-icon name="enter"></ui-icon></button><button class="fx" aria-label="插入函数">fx</button></div>
<div class="box f"><input aria-label="编辑栏" value="张三"><button aria-label="展开编辑栏"><ui-icon name="chevdown"></ui-icon></button></div>`);

/* ---------- worksheet ---------- */
const COLS = [['A', 82], ['B', 65], ['C', 69], ['D', 104], ['E', 320], ['F', 82], ...'GHIJKLMNOPQ'.split('').map(c => [c, 104])];
const DATA = [['姓名', '年级', '成绩'], ['张三', '三', 92], ['李四', '三', 96], ['王五', '三', 83], ['赵六', '三', 79], ['佩奇', '三', 81], ['安迪', '三', 90], ['丽莎', '三', 80], ['李四', '三', 96], ['佩奇', '三', 81], ['赵六', '三', 79]];
define('sheet-grid', `:host{display:block;overflow:hidden;background:#fff;border-right:1px solid #9f9f9f;border-bottom:1px solid #9f9f9f}
table{border-collapse:separate;border-spacing:0;table-layout:fixed;width:1909px}
th,td{padding:0;height:28px;text-align:center;border:0 solid #d4d4d4;border-width:0 1px 1px 0;white-space:nowrap}
th{font-weight:400;font-size:20px;line-height:22px;background:#e6e6e6;color:#222}thead th{border-color:#9f9f9f;border-right-color:#b8b8b8;padding-top:4px}thead th:first-child ui-icon{margin:0 3px 0 auto;width:20px}
tbody th{border-right-color:#9f9f9f;border-bottom-color:#bdbdbd;padding-top:4px}
td{font:22px/24px Roboto,"Noto Sans CJK SC",sans-serif;color:#111;padding-top:3px}
tr.h td,tr.h th{height:41px}tr.h td{font-weight:700}tr.h th{vertical-align:bottom}
th.s{background:#d2d2d2;color:#217346}thead th.s{border-bottom:2px solid #217346}tbody th.s{border-right:2px solid #217346}
.k{border-bottom-color:#000}.v{border-right-color:#000}.gv{border-right-color:#217346}.gb{border-bottom-color:#217346}.sel{box-shadow:inset 1px 0 #217346;background:#c6c6c6}.first{background:#fff}.end{border-bottom-color:#217346}`, () => {
  let h = `<table><colgroup><col style="width:43px">${COLS.map(c => `<col style="width:${c[1]}px">`).join('')}</colgroup><thead><tr><th><ui-icon name="corner"></ui-icon></th>${COLS.map(c => `<th${c[0] === 'F' ? ' class="s"' : ''}>${c[0]}</th>`).join('')}</tr></thead><tbody>`;
  for (let r = 1; r <= 22; r++) {
    const d = DATA[r - 1], in_ = r >= 2 && r <= 11;
    h += `<tr${r === 1 ? ' class="h"' : ''}><th${in_ ? ' class="s"' : ''}>${r}</th>`;
    COLS.forEach(([c], i) => {
      let k = '', t = '';
      if (d && i < 3) { t = d[i]; k = 'k' + (i < 2 || r > 3 ? ' v' : ''); }
      if (d && c === 'E') k = r === 1 ? 'v' : 'gv';
      if (d && c === 'F') { t = d[0]; k = r === 1 ? 'gb v' : `k gv sel${r === 2 ? ' first' : ''}${r === 11 ? ' end' : ''}`; }
      h += `<td class="${k}">${t}</td>`;
    });
    h += '</tr>';
  }
  return h + '</tbody></table>';
});
define('scroll-strip', `:host{display:flex;background:#dadada;color:#666}:host([vertical]){flex-direction:column}
button,.thumb{display:grid;place-items:center;background:#fff;border:1px solid #ababab;width:25px;height:25px}.thumb{flex:1}.track{width:40px}:host([vertical]) .track{width:auto;height:30px}:host([vertical]) .thumb{height:auto}:host(:not([vertical])) .thumb{width:auto;border-left-width:2px}`,
  el => { const v = el.hasAttribute('vertical'); return `<button aria-label="向${v ? '上' : '左'}滚动"><ui-icon name="${v ? 'up' : 'left'}"></ui-icon></button><div class="thumb"></div><div class="track"></div><button aria-label="向${v ? '下' : '右'}滚动"><ui-icon name="${v ? 'down' : 'right'}"></ui-icon></button>`; });
define('level-meter', `:host{display:block;position:absolute;right:0;top:391px;width:15px;height:89px;border:2px solid #343947;border-right:0;border-radius:6px 0 0 6px;background:#525c73;padding:9px 2px 8px 4px}
div{height:100%;background:repeating-linear-gradient(transparent 0 2px,#343947 2px 3px),linear-gradient(#41485b 0 47%,#c8c94c 49%,#7fcb83 70%,#4fd0c0)}`, `<div></div>`);
define('sheet-tabs', `:host{display:flex;align-items:stretch;height:32px;border-bottom:1px solid #c6c6c6}
.nav{display:flex;gap:26px;width:115px;padding:0 0 0 28px;align-items:center;color:#b9b9b9}.tab{width:93px;height:30px;background:#fff;border:1px solid #9f9f9f;border-top:0;border-bottom:2px solid #217346;color:#217346;font-size:19px;font-weight:600;line-height:24px;margin-top:-1px;padding-bottom:3px;position:relative}
.add{margin-left:37px;align-self:center}.dots{margin:7px 17px 0 auto}scroll-strip{width:724px;height:25px;margin:3px 29px 0 0}`,
`<div class="nav"><button aria-label="上一张"><ui-icon name="left"></ui-icon></button><button aria-label="下一张"><ui-icon name="right"></ui-icon></button></div><button class="tab">Sheet1</button><button class="add" aria-label="新工作表"><ui-icon name="add"></ui-icon></button><ui-icon class="dots" name="dots"></ui-icon><scroll-strip></scroll-strip>`);
define('status-bar', `:host{display:flex;align-items:center;height:33px;background:#f3f3f3;padding:0 12px 0 11px;color:#333}
.m{margin-left:27px;height:20px}.count{margin-left:auto;margin-right:29px}.view{display:grid;place-items:center;width:60px;height:33px}.on{background:#c6c6c6}
.z{width:12px;text-align:center;font-size:20px}.out{margin-left:8px}input{appearance:none;width:148px;margin:0 8px;height:20px;background:linear-gradient(#a6a6a6,#a6a6a6) center/100% 2px no-repeat}input::-webkit-slider-thumb{appearance:none;width:8px;height:18px;background:#666}.pct{margin-left:20px}`,
`<span>就绪</span><ui-icon class="m" name="macro"></ui-icon><span class="count">计数: 11</span><button class="view on" aria-label="普通"><ui-icon name="normal"></ui-icon></button><button class="view" aria-label="页面布局"><ui-icon name="layout"></ui-icon></button><button class="view" aria-label="分页预览"><ui-icon name="pagebreak"></ui-icon></button><button class="z out" aria-label="缩小">−</button><input type="range" aria-label="缩放" min="0" max="100" value="50"><button class="z" aria-label="放大">+</button><span class="pct">100%</span>`);

/* ---------- dialog ---------- */
define('check-option', `:host{display:block}label{display:flex;align-items:center;gap:9px;white-space:nowrap}input{appearance:none;width:20px;height:20px;border:1px solid #222;background:#fff;display:grid;place-items:center}
input:checked::before{content:"";width:6px;height:12px;border:solid #222;border-width:0 2px 2px 0;transform:translateY(-2px) rotate(42deg)}`, `<label><input type="checkbox" checked><span><slot></slot></span></label>`);
define('dialog-button', `:host{display:block}button{display:flex;align-items:center;justify-content:center;gap:4px;width:100%;height:36px;border:1px solid #adadad;background:#e1e1e1;color:#000;white-space:nowrap}:host([focus]) button{border:2px solid #0078d7;outline:1px dotted #000;outline-offset:-4px}:host([hot]) button{border-color:#0078d7;background:#e5f1fb}`,
  el => `<button>${el.hasAttribute('icon') ? `<ui-icon name="${el.getAttribute('icon')}"></ui-icon>` : ''}<span><slot></slot></span></button>`);
define('dedupe-dialog', `:host{display:flex;flex-direction:column;position:absolute;left:745px;top:41px;width:520px;height:456px;border:1px solid #6d6d6d;background:#f0f0f0;color:#000;box-shadow:0 4px 16px rgba(0,0,0,.32)}
header{display:flex;align-items:center;height:44px;background:#fff;padding:0 27px 2px 11px}header span{flex:1}header button{font-size:20px}header button+button{margin-left:57px}
.body{flex:1;display:flex;flex-direction:column;padding:13px 9px}p{margin:0 0 6px;white-space:nowrap}
.bar{display:flex;height:66px;border:1px solid #dcdcdc;padding:14px 0 0 17px}.bar .a{width:114px;margin-right:16px}.bar .u{width:150px;margin-right:15px}.bar check-option{margin-top:2px}
.list{height:199px;margin-top:23px;border:1px solid #828790;background:#fff;padding:2px}.head{height:34px;border-right:1px solid #e0e0e0;padding:4px 5px}.list check-option{margin:3px 0 0 1px}
.act{display:flex;justify-content:flex-end;gap:16px;margin:30px 1px 0 0}.act dialog-button{width:111px}.grip{position:absolute;right:1px;bottom:1px;height:12px}`,
`<header><span>删除重复值</span><button aria-label="帮助">?</button><button aria-label="关闭"><ui-icon name="dlgclose"></ui-icon></button></header>
<div class="body"><p>若要删除重复值，请选择一个或多个包含重复值的列。</p><div class="bar"><dialog-button class="a" focus icon="checklist">全选(<u>A</u>)</dialog-button><dialog-button class="u" icon="unchecklist">取消全选(<u>U</u>)</dialog-button><check-option>数据包含标题(<u>M</u>)</check-option></div>
<div class="list"><div class="head">列</div><check-option>姓名</check-option></div><div class="act"><dialog-button hot>确定</dialog-button><dialog-button>取消</dialog-button></div></div><ui-icon class="grip" name="grip"></ui-icon>`);

/* ---------- taskbar ---------- */
define('task-button', `:host{display:block}button{display:grid;place-items:center;width:var(--w,72px);height:60px}:host([running]) button{border-bottom:3px solid #76b9ed;padding-top:3px}:host([active]) button{background:#4b5152}`,
  el => `<button aria-label="${el.getAttribute('icon')}"><ui-icon name="${el.getAttribute('icon')}"></ui-icon></button>`);
define('task-bar', `:host{display:flex;align-items:stretch;height:60px;background:linear-gradient(90deg,#20282a 0,#262929 60px,#3b3b3b 130px,#383838 185px,#252b2b 260px,#202829 330px,#1f2729)}
.sys,.apps{display:flex}.sep{width:5px;height:36px;margin:12px 35px 0 10px;border:solid #555;border-width:0 1px}.apps task-button{--w:61px;margin-right:15px}.apps .f{--w:36px;margin-right:26px}.apps .w,.apps .x{margin-right:8px}.apps .x{--w:73px}
.tray{display:flex;align-items:center;margin-left:auto;padding:0 242px 0 0;gap:13px}.mi{margin-right:12px}.wf{margin:0 4px}`,
`<div class="sys"><task-button icon="start"></task-button><task-button icon="search"></task-button><task-button icon="cortana"></task-button><task-button icon="taskview"></task-button></div><div class="sep"></div>
<div class="apps"><task-button class="f" icon="folder"></task-button><task-button icon="edge" running></task-button><task-button class="w" icon="word" running></task-button><task-button class="x" icon="excel" running active></task-button><task-button icon="wechat" running></task-button></div>
<div class="tray"><ui-icon class="mi" name="mi"></ui-icon><ui-icon name="chevup"></ui-icon><ui-icon name="wechats"></ui-icon><ui-icon name="battery"></ui-icon><ui-icon name="speaker"></ui-icon><ui-icon class="wf" name="wifi"></ui-icon><ui-icon name="pen"></ui-icon></div>`);
define('pixel-patch', `:host{display:block;position:absolute;right:7px;bottom:0;pointer-events:none}`, () => {
  const cols = ['#303536', '#535757', '#1e2324', '#2f3334', '#34393a', '#25292b', '#1c2123', '#26292b', '#24282a', '#24282a'], row2 = ['#1f2425', '#1f2425', '#2e3233', '#444748', '#3f4344', '#414546', '#1d2223', '#232829', '#2b2e2f', '#202526'];
  return `<svg width="234" height="73" viewBox="0 0 234 73"><defs><clipPath id="p"><path d="M0 42C2 18 12 2 38 2L190 0c28 0 43 14 44 42 0 16-4 24-14 31H16C5 68 0 55 0 42z"/></clipPath></defs><g clip-path="url(#p)"><path d="M0 0h234v26H0z" fill="#828685" fill-opacity=".94"/>${cols.map((c, i) => `<rect x="${i * 24}" y="25" width="24" height="25" fill="${c}"/><rect x="${i * 24}" y="49" width="24" height="24" fill="${row2[i]}"/>`).join('')}</g></svg>`;
});
define('water-mark', `:host{display:block;position:absolute;right:100px;bottom:36px;pointer-events:none}
svg{overflow:visible;filter:drop-shadow(0 0 1px rgba(110,110,110,.75))}`,
`<svg width="350" height="168" viewBox="1470 876 350 168"><g fill="#fff" fill-opacity=".86" stroke="#c4c4c4" stroke-opacity=".7" stroke-width="1.500"><ellipse cx="1605" cy="917" rx="13" ry="17"/><ellipse cx="1629" cy="893" rx="13" ry="18"/><ellipse cx="1660" cy="895" rx="13" ry="17"/><ellipse cx="1679" cy="925" rx="13" ry="17"/><path d="M1641 920c-17 0-18 17-29 26-15 12-15 36 3 38 10 2 17-2 27-2s17 4 27 2c18-3 18-26 4-38-13-9-15-26-32-26z"/>
<text x="1472" y="982" font-family="Open Sans" font-weight="800" font-size="76">Bai</text><text x="1612" y="974" font-family="Open Sans" font-weight="600" font-size="48" stroke="#b4b4b4" stroke-opacity="1">du</text><text x="1696" y="976" font-family="Noto Sans CJK SC" font-weight="900" font-size="57">经验</text></g>
<text x="1477" y="1027" font-family="Open Sans" font-weight="600" font-size="39" fill="#fff" fill-opacity=".92" stroke="#bbb" stroke-opacity=".5" stroke-width=".7">jingyan.baidu.com</text></svg>`);

define('excel-desktop', `:host{display:flex;flex-direction:column;height:100vh;min-height:720px;position:relative;overflow:hidden}
.top{background:#217346;position:relative}.sheet{flex:1;min-height:0;display:flex;position:relative}sheet-grid{flex:1;min-width:0}.v{width:30px;flex:none;padding:1px 3px 0 2px;display:flex}.v scroll-strip{flex:1}`,
`<div class="top"><circuit-art></circuit-art><title-bar></title-bar><ribbon-tabs></ribbon-tabs></div><data-ribbon></data-ribbon><formula-bar></formula-bar>
<div class="sheet"><sheet-grid></sheet-grid><div class="v"><scroll-strip vertical></scroll-strip></div><level-meter></level-meter><dedupe-dialog></dedupe-dialog></div>
<sheet-tabs></sheet-tabs><status-bar></status-bar><task-bar></task-bar><pixel-patch></pixel-patch><water-mark></water-mark>`);
</script>
</body>
</html>
